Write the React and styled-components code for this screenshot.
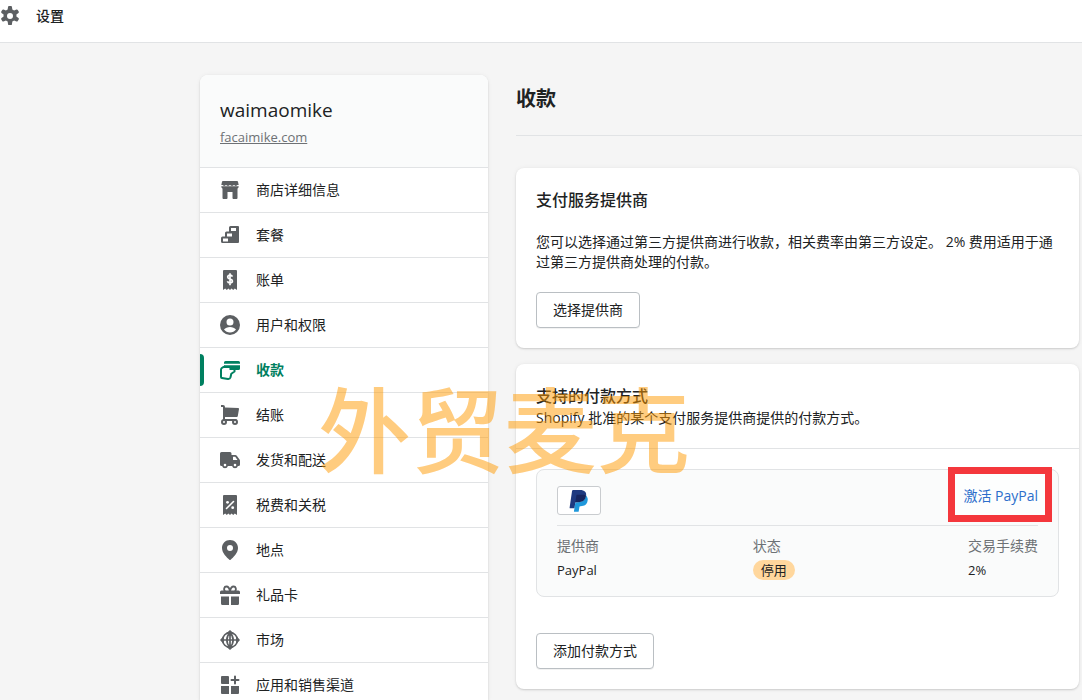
import styled, { createGlobalStyle } from 'styled-components';


const GlobalStyle = createGlobalStyle`
  * {
    box-sizing: border-box;
  }

  html {
    scrollbar-width: none;
  }

  body {
    margin: 0;
    background: #f5f5f5;
    color: #202223;
    font-family: "Open Sans", "Noto Sans CJK SC", sans-serif;
    font-size: 14px;
    line-height: 20px;
  }
`;

const Page = styled.div`
  position: relative;
  height: 100vh;
  overflow: hidden;
`;

const TopBar = styled.header`
  display: flex;
  align-items: flex-start;
  gap: 16px;
  height: 43px;
  padding-top: 6px;
  background: #fff;
  border-bottom: 1px solid #e1e3e5;
`;

const TopBarTitle = styled.span`
  font-weight: 500;
`;

const Icon = styled.svg`
  display: block;
  flex: none;
  width: 20px;
  height: 20px;
  fill: ${(props) => (props.$active ? '#008060' : '#5c5f62')};
`;

const Layout = styled.div`
  display: flex;
  align-items: flex-start;
  gap: 28px;
  padding: 32px 0 32px 200px;
`;

const Card = styled.section`
  background: #fff;
  border-radius: 8px;
  box-shadow: 0 0 5px rgba(23, 24, 24, 0.05), 0 1px 2px rgba(0, 0, 0, 0.15);
`;

const Sidebar = styled(Card).attrs({ as: 'aside' })`
  flex: none;
  width: 288px;
  overflow: hidden;
`;

const Shop = styled.div`
  padding: 21px 20px 20px;
  background: #fafbfb;
`;

const ShopName = styled.div`
  font-size: 19px;
  line-height: 28px;
  margin-bottom: 3px;
`;

const ShopLink = styled.a`
  display: block;
  width: fit-content;
  color: #6d7175;
  font-size: 13px;
`;

const Menu = styled.ul`
  margin: 0;
  padding: 0;
  list-style: none;
`;

const MenuItem = styled.li`
  position: relative;
  border-top: 1px solid #e1e3e5;

  &::before {
    content: "";
    display: ${(props) => (props.$active ? 'block' : 'none')};
    position: absolute;
    left: 0;
    top: 6px;
    bottom: 6px;
    width: 4px;
    border-radius: 0 4px 4px 0;
    background: #008060;
  }
`;

const MenuLink = styled.a`
  display: flex;
  align-items: center;
  gap: 16px;
  padding: 12px 20px;
  color: ${(props) => (props.$active ? '#008060' : '#202223')};
  font-weight: ${(props) => (props.$active ? 600 : 400)};
  text-decoration: none;
`;

const Main = styled.main`
  flex: 1;
  min-width: 0;
`;

const PageTitle = styled.h1`
  margin: 0 0 32px;
  padding: 10px 0 22px;
  border-bottom: 1px solid #e1e3e5;
  font-size: 20px;
  font-weight: 600;
  line-height: 28px;
`;

const Cards = styled.div`
  display: flex;
  flex-direction: column;
  gap: 16px;
  padding-right: 3px;
`;

const Section = styled.div`
  padding: 20px;

  & + & {
    border-top: 1px solid #e1e3e5;
  }
`;

const CardTitle = styled.h2`
  margin: 0;
  font-size: 16px;
  font-weight: 500;
  line-height: 24px;
`;

const Text = styled.p`
  margin: 0;
`;

const Description = styled(Text)`
  margin: 20px 0;
`;

const Button = styled.button`
  display: block;
  height: 36px;
  padding: 0 16px;
  background: #fff;
  border: 1px solid #babfc3;
  border-radius: 4px;
  box-shadow: 0 1px 0 rgba(0, 0, 0, 0.05);
  color: inherit;
  font: inherit;
`;

const Method = styled.div`
  margin-bottom: 36px;
  padding: 16px 20px;
  background: #fafbfb;
  border: 1px solid #e1e3e5;
  border-radius: 8px;
`;

const MethodHeader = styled.div`
  display: flex;
  justify-content: space-between;
  padding-bottom: 10px;
  border-bottom: 1px solid #e1e3e5;
`;

const LogoBox = styled.div`
  display: flex;
  align-items: center;
  justify-content: center;
  width: 44px;
  height: 29px;
  background: #fff;
  border: 1px solid #c9cccf;
  border-radius: 3px;
`;

const ActivateLink = styled.a`
  position: relative;
  z-index: 0;
  align-self: flex-start;
  color: #2c6ecb;
  text-decoration: none;

  &::before {
    content: "";
    position: absolute;
    z-index: -1;
    inset: -19px -14px -16px -15px;
    background: #fdfefe;
    border: 7px solid #f4373c;
  }
`;

const Details = styled.dl`
  display: grid;
  grid-template-columns: 10fr 11fr auto;
  margin: 0;
  padding-top: 10px;
`;

const Label = styled.dt`
  color: #6d7175;
`;

const Value = styled.dd`
  margin: 4px 0 0;
  font-size: 13px;
`;

const Badge = styled.span`
  display: block;
  width: fit-content;
  padding: 0 8px;
  border-radius: 10px;
  background: #ffd79d;
`;

const Watermark = styled.div`
  position: absolute;
  left: 318px;
  top: 372px;
  color: rgba(255, 153, 0, 0.5);
  font-family: "Noto Sans CJK SC", sans-serif;
  font-size: 93px;
  font-weight: 500;
  line-height: 108px;
  white-space: nowrap;
  pointer-events: none;
`;

const gear = 'M9.03 0a1 1 0 0 0-.99.86l-.37 2.6a7 7 0 0 0-1.74 1.01l-2.44-.98a1 1 0 0 0-1.24.43l-.97 1.68a1 1 0 0 0 .25 1.29l2.07 1.62a7 7 0 0 0 0 2l-2.07 1.61a1 1 0 0 0-.25 1.29l.97 1.68a1 1 0 0 0 1.24.43l2.44-.98a7 7 0 0 0 1.74 1.01l.37 2.6a1 1 0 0 0 .99.85h1.94a1 1 0 0 0 .99-.86l.37-2.59a7 7 0 0 0 1.74-1.01l2.44.98a1 1 0 0 0 1.24-.43l.97-1.68a1 1 0 0 0-.25-1.29l-2.07-1.61a7 7 0 0 0 0-2l2.07-1.62a1 1 0 0 0 .25-1.29l-.97-1.68a1 1 0 0 0-1.24-.43l-2.44.98a7 7 0 0 0-1.74-1.01l-.37-2.6a1 1 0 0 0-.99-.86zM10 13a3 3 0 1 1 0-6 3 3 0 0 1 0 6z';

const receipt = 'M4 0h12a1 1 0 0 1 1 1v19l-2.200-1.600L13.200 20l-1.600-1.600L10 20l-1.600-1.600L6.800 20l-1.600-1.600L3 20V1a1 1 0 0 1 1-1z';

const menu = [
  {
    name: '商店详细信息',
    icon: <>
      <path d="M3 1h14a1 1 0 0 1 1 .8l.7 3.200h-1.200c-.6 0-.8 1-1.700 1S14.700 5 14 5s-1.100 1-2 1-1.300-1-2-1-1.100 1-2 1-1.300-1-2-1-.9 1-1.800 1S3.100 5 2.500 5H1.300L2 1.800A1 1 0 0 1 3 1z" />
      <path d="M1.300 6.300h17.400v.3c0 1-.7 1.800-1.200 2V18a1 1 0 0 1-1 1h-3a1 1 0 0 1-1-1v-6h-5v6a1 1 0 0 1-1 1h-3a1 1 0 0 1-1-1V8.600c-.5-.2-1.200-1-1.200-2z" />
    </>,
  },
  {
    name: '套餐',
    icon: <path fillRule="evenodd" d="M10.500 1H18a1 1 0 0 1 1 1v15a1 1 0 0 1-1 1H2.500A1.500 1.500 0 0 1 1 16.500V13a1.500 1.500 0 0 1 1.500-1.500H5V8a1.500 1.500 0 0 1 1.500-1.500H9v-4A1.500 1.500 0 0 1 10.500 1zM11 3v3h5V3zM7 8.500v3h5v-3zM3 13.500v3h5v-3z" />,
  },
  {
    name: '账单',
    icon: <>
      <path d={receipt} />
      <path d="M12.400 6.600C12 5.600 11.200 5.200 10 5.200c-1.400 0-2.300.7-2.300 1.900 0 2.700 4.700 1.300 4.700 4 0 1.200-1 1.900-2.400 1.900-1.300 0-2.200-.6-2.600-1.700M10 3.200v12" fill="none" stroke="#fff" strokeWidth="1.700" />
    </>,
  },
  {
    name: '用户和权限',
    icon: <path fillRule="evenodd" d="M10 0a10 10 0 1 1 0 20 10 10 0 0 1 0-20zm0 3.500a3.500 3.500 0 1 0 0 7 3.500 3.500 0 0 0 0-7zM4 14.600A7.500 7.500 0 0 0 10 17.600a7.500 7.500 0 0 0 6-3c-1.300-1.600-3.500-2.600-6-2.600s-4.700 1-6 2.600z" />,
  },
  {
    name: '收款',
    active: true,
    icon: <>
      <path d="M5.500 1h13A1.500 1.500 0 0 1 20 2.500v1.300H4V2.500A1.500 1.500 0 0 1 5.500 1z" />
      <path d="M4 5.300h16v3.200a1.500 1.500 0 0 1-1.500 1.500H12L9.500 8H4z" />
      <path d="M5 6.300 2.300 7.700A2.300 2.300 0 0 0 1 9.700V17a1 1 0 0 0 .9 1l6.100.9c1.500.1 2.200-.6 2.500-1.700l.8-3.500 3.200-2.200V9H9.500" fill="none" stroke="#008060" strokeWidth="2" strokeLinejoin="round" />
    </>,
  },
  {
    name: '结账',
    icon: <>
      <path d="M5 2.500 18.200 3a.8.8 0 0 1 .8.900l-1.200 7.100a1 1 0 0 1-1 .900H5z" />
      <path d="M1 1h2a1 1 0 0 1 1 1v13h12.500" fill="none" stroke="#5c5f62" strokeWidth="2" />
      <path fillRule="evenodd" d="M4 14a3 3 0 1 1 0 6 3 3 0 0 1 0-6zm0 2a1 1 0 1 0 0 2 1 1 0 0 0 0-2zM15 14a3 3 0 1 1 0 6 3 3 0 0 1 0-6zm0 2a1 1 0 1 0 0 2 1 1 0 0 0 0-2z" />
    </>,
  },
  {
    name: '发货和配送',
    icon: <path fillRule="evenodd" d="M1.500 2H10a1.500 1.500 0 0 1 1.500 1.500V5h3.700a2 2 0 0 1 1.600.800l2.700 3.700a2 2 0 0 1 .5 1.300V14.500a1.500 1.500 0 0 1-1.500 1.500h-.600a3 3 0 0 1-5.800 0H7.900a3 3 0 0 1-5.800 0h-.600A1.500 1.500 0 0 1 0 14.500v-11A1.500 1.500 0 0 1 1.500 2zM13 6.800V10h4.500l-2.300-3.200zM5 13.800a1.300 1.300 0 1 0 0 2.600 1.300 1.300 0 0 0 0-2.600zm10 0a1.300 1.300 0 1 0 0 2.600 1.300 1.300 0 0 0 0-2.600z" />,
  },
  {
    name: '税费和关税',
    icon: <>
      <path d={receipt} />
      <path d="m6.500 13.500 7-7" stroke="#fff" strokeWidth="1.600" strokeLinecap="round" />
      <circle cx="7.500" cy="7.300" r="1.400" fill="#fff" />
      <circle cx="12.700" cy="12.700" r="1.400" fill="#fff" />
    </>,
  },
  {
    name: '地点',
    icon: <path fillRule="evenodd" d="M10 0c4.500 0 8 3.400 8 8 0 5-4.800 9.500-7.400 11.800a1 1 0 0 1-1.200 0C6.800 17.500 2 13 2 8c0-4.600 3.500-8 8-8zm0 5a3 3 0 1 0 0 6 3 3 0 0 0 0-6z" />,
  },
  {
    name: '礼品卡',
    icon: <>
      <path d="M1.500 5.500h17A1.500 1.500 0 0 1 20 7v2H0V7a1.500 1.500 0 0 1 1.500-1.500zM1 11.500h8V20H2.500A1.500 1.500 0 0 1 1 18.500zM11 11.500h8v7a1.500 1.500 0 0 1-1.500 1.500H11z" />
      <path d="M10 6.500C9.500 3 8.300 1.500 6.300 1.500S3.200 4.500 5 6.500M10 6.500c.5-3.500 1.700-5 3.700-5s3.100 3 1.300 5" fill="none" stroke="#5c5f62" strokeWidth="1.900" />
    </>,
  },
  {
    name: '市场',
    icon: <>
      <path d="M10 2.600a7.400 7.400 0 1 1 0 14.800 7.400 7.400 0 0 1 0-14.800zM2 10h16M10 2v16M10 2.600c-4.200 4-4.200 10.800 0 14.800M10 2.600c4.200 4 4.200 10.800 0 14.800" fill="none" stroke="#5c5f62" strokeWidth="1.700" />
      <path d="m10 0 4.200 3.800H5.800zM10 20l4.200-3.800H5.800zM0 10l3.800-4.200v8.400zM20 10l-3.800-4.200v8.400z" />
    </>,
  },
  {
    name: '应用和销售渠道',
    icon: <>
      <path d="M2 1h6a1 1 0 0 1 1 1v7H2a1 1 0 0 1-1-1V2a1 1 0 0 1 1-1zM1 11h8v8H2a1 1 0 0 1-1-1zM11 11h8v7a1 1 0 0 1-1 1h-7z" />
      <path d="M15 1.500v7M11.500 5h7" stroke="#5c5f62" strokeWidth="2" strokeLinecap="round" />
    </>,
  },
];


function SidebarItem(props) {
  return <MenuItem $active={props.active}>
    <MenuLink href="#" $active={props.active} aria-current={props.active ? 'page' : undefined}>
      <Icon viewBox="0 0 20 20" $active={props.active} aria-hidden="true">{props.icon}</Icon>
      {props.name}
    </MenuLink>
  </MenuItem>;
}


function PayPalLogo() {
  return <svg width="20" height="22" viewBox="14 5 11.300 13.200" role="img" aria-label="PayPal">
    <path fill="#1f3a80" d="M23.900 8.300c.2-1 0-1.700-.6-2.300-.6-.7-1.700-1-3.100-1h-4.100c-.3 0-.5.2-.6.5L14 15.600c0 .2.1.4.3.4H17l.4-3.400 1.800-2.200 4.700-2.100z" />
    <path fill="#1f98db" d="M23.900 8.300l-.2.2c-.5 2.800-2.200 3.800-4.600 3.800H18c-.3 0-.5.2-.6.5l-.6 3.900-.2 1c0 .2.1.4.3.4H19c.3 0 .5-.2.5-.4v-.1l.4-2.400v-.1c0-.2.3-.4.5-.4h.3c2.100 0 3.700-.8 4.100-3.200.2-1 .1-1.800-.4-2.400-.1-.5-.3-.7-.5-.8z" />
    <path fill="#17265f" d="M23.300 8.100c-.1-.1-.2-.1-.3-.1-.1 0-.2 0-.3-.1-.3-.1-.7-.1-1.100-.1h-3c-.1 0-.2 0-.2.1-.2.1-.3.2-.3.4l-.7 4.400v.1c0-.3.3-.5.6-.5h1.300c2.500 0 4.100-1 4.600-3.800v-.2c-.1-.1-.3-.2-.5-.2h-.1z" />
  </svg>;
}


function App() {
  return <Page>
    <GlobalStyle />
    <TopBar>
      <Icon viewBox="0 0 20 20" aria-hidden="true"><path fillRule="evenodd" d={gear} /></Icon>
      <TopBarTitle>设置</TopBarTitle>
    </TopBar>
    <Layout>
      <Sidebar>
        <Shop>
          <ShopName>waimaomike</ShopName>
          <ShopLink href="#">facaimike.com</ShopLink>
        </Shop>
        <nav>
          <Menu>
            {menu.map((item) =>
              <SidebarItem key={item.name} name={item.name} icon={item.icon} active={item.active} />
            )}
          </Menu>
        </nav>
      </Sidebar>
      <Main>
        <PageTitle>收款</PageTitle>
        <Cards>
          <Card>
            <Section>
              <CardTitle>支付服务提供商</CardTitle>
              <Description>您可以选择通过第三方提供商进行收款，相关费率由第三方设定。 2% 费用适用于通过第三方提供商处理的付款。</Description>
              <Button type="button">选择提供商</Button>
            </Section>
          </Card>
          <Card>
            <Section>
              <CardTitle>支持的付款方式</CardTitle>
              <Text>Shopify 批准的某个支付服务提供商提供的付款方式。</Text>
            </Section>
            <Section>
              <Method>
                <MethodHeader>
                  <LogoBox><PayPalLogo /></LogoBox>
                  <ActivateLink href="#">激活 PayPal</ActivateLink>
                </MethodHeader>
                <Details>
                  <div>
                    <Label>提供商</Label>
                    <Value>PayPal</Value>
                  </div>
                  <div>
                    <Label>状态</Label>
                    <Value><Badge>停用</Badge></Value>
                  </div>
                  <div>
                    <Label>交易手续费</Label>
                    <Value>2%</Value>
                  </div>
                </Details>
              </Method>
              <Button type="button">添加付款方式</Button>
            </Section>
          </Card>
        </Cards>
      </Main>
    </Layout>
    <Watermark>外贸麦克</Watermark>
  </Page>;
}

export default App;
